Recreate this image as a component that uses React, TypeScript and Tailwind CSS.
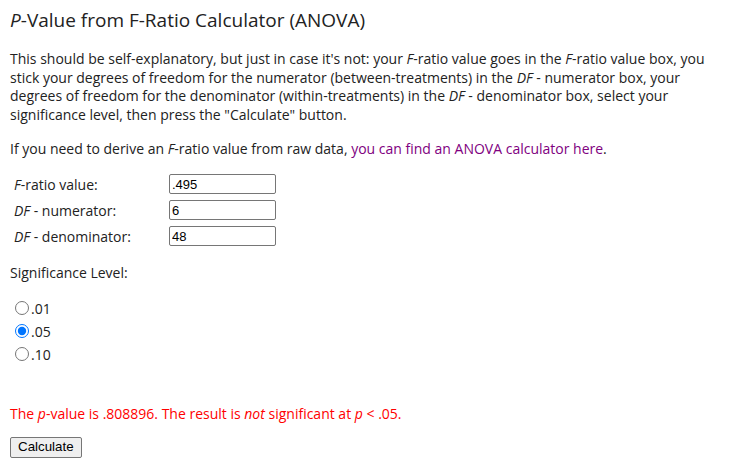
import { useState } from "react";

const levels = [".01", ".05", ".10"];

export default function App() {
  const [fRatio, setFRatio] = useState(".495");
  const [dfNum, setDfNum] = useState("6");
  const [dfDen, setDfDen] = useState("48");
  const [level, setLevel] = useState(".05");

  return (
    <div className="min-h-[470px] bg-white px-[10px] pt-[7px] text-[#222] font-['Open_Sans',sans-serif]">
      <h1 className="text-[19px] leading-[27px] font-normal">
        <i>P</i>-Value from F-Ratio Calculator (ANOVA)
      </h1>

      <p className="mt-[16px] text-[14px] leading-[18.5px] pr-[10px]">
        This should be self-explanatory, but just in case it's not: your <i>F</i>-ratio value goes in the{" "}
        <i>F</i>-ratio value box, you stick your degrees of freedom for the numerator (between-treatments) in
        the <i>DF</i> - numerator box, your degrees of freedom for the denominator (within-treatments) in the{" "}
        <i>DF</i> - denominator box, select your significance level, then press the "Calculate" button.
      </p>

      <p className="mt-[16px] text-[14px] leading-[18.5px]">
        If you need to derive an <i>F</i>-ratio value from raw data,{" "}
        <a href="#" className="text-[#800080]">
          you can find an ANOVA calculator here
        </a>
        .
      </p>

      <div className="mt-[15px] flex flex-col gap-[5px] text-[14px] pl-[4px]">
        <Row label={<><i>F</i>-ratio value:</>} value={fRatio} onChange={setFRatio} />
        <Row label={<><i>DF</i> - numerator:</>} value={dfNum} onChange={setDfNum} />
        <Row label={<><i>DF</i> - denominator:</>} value={dfDen} onChange={setDfDen} />
      </div>

      <p className="mt-[17px] text-[14px] leading-[18.5px]">Significance Level:</p>

      <div className="mt-[17px] flex flex-col gap-[5px] text-[14px]">
        {levels.map((l) => (
          <label key={l} className="flex h-[18px] items-center">
            <input
              type="radio"
              name="level"
              checked={level === l}
              onChange={() => setLevel(l)}
              className="m-0 ml-[5px] mr-[2px] h-[14px] w-[14px] accent-[#0075ff]"
            />
            {l}
          </label>
        ))}
      </div>

      <p className="mt-[42px] text-[14px] leading-[18.5px] text-[#ff0000]">
        The <i>p</i>-value is .808896. The result is <i>not</i> significant at <i>p</i> &lt; .05.
      </p>

      <button className="mt-[13px] h-[21px] rounded-[2px] border border-[#767676] bg-[#efefef] px-[7px] text-[13.33px] leading-none text-black font-['Liberation_Sans',Arial,sans-serif]">
        Calculate
      </button>
    </div>
  );
}

function Row({
  label,
  value,
  onChange,
}: {
  label: React.ReactNode;
  value: string;
  onChange: (v: string) => void;
}) {
  return (
    <div className="flex items-center">
      <span className="w-[155px]">{label}</span>
      <input
        value={value}
        onChange={(e) => onChange(e.target.value)}
        className="h-[20px] w-[107px] rounded-[2px] border border-[#767676] px-[2px] text-[13px] text-black font-['Liberation_Sans',Arial,sans-serif] outline-none"
      />
    </div>
  );
}
